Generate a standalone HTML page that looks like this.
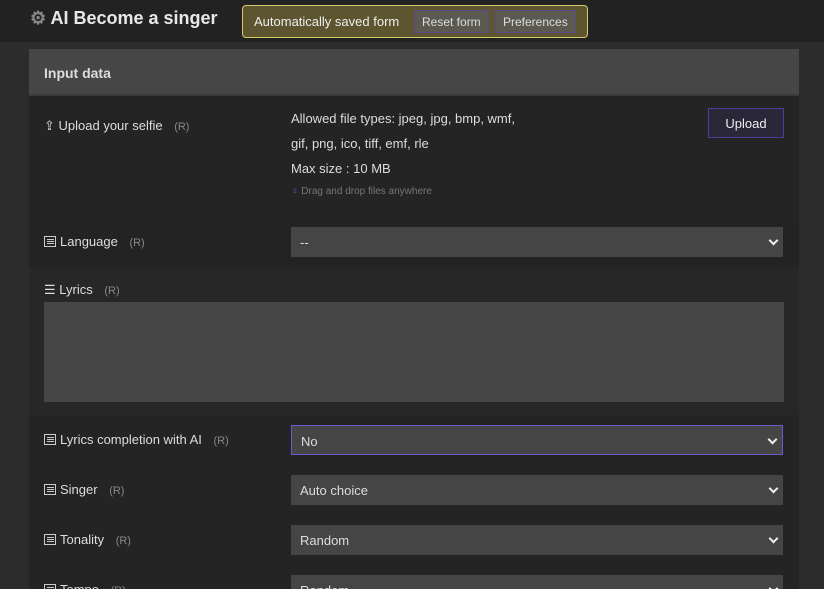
<!DOCTYPE html>
<html><head><meta charset="utf-8"><style>
*{box-sizing:border-box;margin:0;padding:0}
html{width:824px;height:589px;overflow:hidden}
body{width:824px;height:589px;overflow:hidden;background:#2c2c2c;font-family:"Liberation Sans",sans-serif;color:#ddd;font-size:13px;position:relative}
.top{position:absolute;left:0;top:0;width:824px;height:42px;background:#222}
.title{position:absolute;left:30px;top:8px;font-size:18px;font-weight:bold;color:#e8e8e8}
.saved{position:absolute;left:242px;top:5px;width:346px;height:33px;background:#5c5530;border:1px solid #d6cb6a;border-radius:4px;font-size:13px;color:#eee;padding:8px 0 0 11px}
.b{position:absolute;top:4px;height:23px;border:1px solid #5a4a8a;background:#5b5a50;font-size:12px;color:#ddd;padding:4px 7px}
.panel{position:absolute;left:29px;top:49px;width:770px;height:540px;background:#242424;overflow:hidden}
.head{height:47px;background:#464646;border-bottom:2px solid #3a3a3a;font-weight:bold;font-size:14px;padding:16px 15px}
.row{position:absolute;left:0;width:770px}
.lab{position:absolute;left:15px;font-size:13px;color:#ddd}
.r{color:#888;font-size:11px;margin-left:8px}
.sel{position:absolute;left:262px;width:492px;height:30px;background:#454545;color:#ddd;padding:8px 9px;font-size:13px}
.sel:after{content:"";position:absolute;right:6px;top:10px;width:5px;height:5px;border-right:2px solid #eee;border-bottom:2px solid #eee;transform:rotate(45deg)}
.ic{display:inline-block;width:12px;height:11px;border:1px solid #ccc;margin-right:4px;vertical-align:-1px;background:linear-gradient(#ccc,#ccc) 2px 2px/7px 1px no-repeat,linear-gradient(#ccc,#ccc) 2px 4px/7px 1px no-repeat,linear-gradient(#ccc,#ccc) 2px 6px/7px 1px no-repeat}
</style></head><body>
<div class="top"></div>
<div class="title"><span style="color:#888">⚙</span> AI Become a singer</div>
<div class="saved">Automatically saved form
<span class="b" style="left:171px">Reset form</span><span class="b" style="left:252px">Preferences</span></div>
<div class="panel">
<div class="head">Input data</div>
<div class="row" style="top:49px;height:120px;background:#242424">
 <div class="lab" style="top:20px">⇪ Upload your selfie <span class="r">(R)</span></div>
 <div style="position:absolute;left:262px;top:8px;line-height:25px;font-size:13px">Allowed file types: jpeg, jpg, bmp, wmf,<br>gif, png, ico, tiff, emf, rle<br>Max size : 10 MB</div>
 <div style="position:absolute;left:262px;top:88px;font-size:10px;color:#777"><span style="color:#6a5acd">♀</span> Drag and drop files anywhere</div>
 <div style="position:absolute;left:679px;top:10px;width:76px;height:30px;border:1px solid #4a3e9a;background:#2a2838;color:#eee;text-align:center;padding-top:7px">Upload</div>
</div>
<div class="row" style="top:169px;height:49px;background:#232323">
 <div class="lab" style="top:16px"><span class="ic"></span>Language <span class="r">(R)</span></div>
 <div class="sel" style="top:9px">--</div>
</div>
<div class="row" style="top:218px;height:148px;background:#272727">
 <div class="lab" style="top:15px">☰ Lyrics <span class="r">(R)</span></div>
 <div style="position:absolute;left:15px;top:35px;width:740px;height:100px;background:#464646"></div>
</div>
<div class="row" style="top:366px;height:200px;background:#242424">
 <div class="lab" style="top:17px"><span class="ic"></span>Lyrics completion with AI <span class="r">(R)</span></div>
 <div class="sel" style="top:10px;border:1px solid #6a5acd">No</div>
 <div class="lab" style="top:67px"><span class="ic"></span>Singer <span class="r">(R)</span></div>
 <div class="sel" style="top:60px">Auto choice</div>
 <div class="lab" style="top:117px"><span class="ic"></span>Tonality <span class="r">(R)</span></div>
 <div class="sel" style="top:110px">Random</div>
 <div class="lab" style="top:167px"><span class="ic"></span>Tempo <span class="r">(R)</span></div>
 <div class="sel" style="top:160px">Random</div>
</div>
</div>
</body></html>
